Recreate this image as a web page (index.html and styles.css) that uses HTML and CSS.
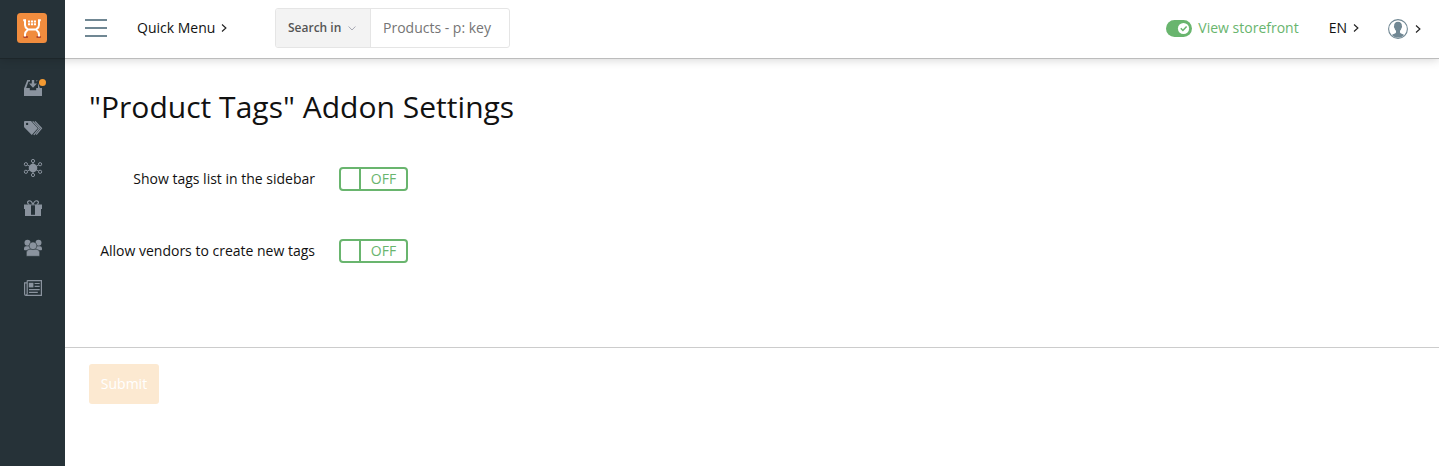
FILE: index.html
```html
<!DOCTYPE html>
<html lang="en">
<head>
<meta charset="utf-8">
<title>Addon Settings</title>
<link rel="stylesheet" href="styles.css">
</head>
<body>
<header class="topbar">
  <a class="brand">
    <svg width="30" height="30" viewBox="0 0 30 30">
      <rect width="30" height="30" rx="3.5" fill="#f08c3e"/>
      <path d="M7.2 24H10.2M20.2 24H23.2" stroke="#b5492c" stroke-width="1.8" stroke-linecap="round"/>
      <path d="M6.2 7.3H8V12C8 14.5 9.3 15.2 11 16.5H19C20.7 15.2 22 14.5 22 12V7.3H23.8M8 23.5V21.2C8 19 9.3 18 11 16.5M22 23.5V21.2C22 19 20.7 18 19 16.5" fill="none" stroke="#fff" stroke-width="2"/>
      <path d="M11 8.5H19M11 11.3H19" stroke="#fff" stroke-width="2" stroke-dasharray="2.1 .85"/>
    </svg>
  </a>
  <div class="bar">
    <svg class="burger" width="22" height="18" viewBox="0 0 22 18"><path d="M0 1H22M0 9H22M0 17H22" stroke="#708793" stroke-width="2"/></svg>
    <a class="quick">Quick Menu <svg class="caret" width="6" height="8" viewBox="0 0 6 8"><path d="M1 .5L4.9 4L1 7.5"/></svg></a>
    <div class="search">
      <span class="scope">Search in <svg width="8" height="5" viewBox="0 0 8 5"><path d="M.6.5L4 4L7.4.5" fill="none" stroke="#a7a9b4"/></svg></span>
      <span class="query">Products - p: key</span>
    </div>
    <a class="storefront">
      <svg width="26" height="17" viewBox="0 0 26 17"><rect width="26" height="17" rx="8.5" fill="#69b56e"/><circle cx="17.5" cy="8.5" r="5.6" fill="#fff"/><path d="M14.8 8.3L16.9 10.5L20.6 6.5" fill="none" stroke="#69b56e" stroke-width="1.5"/></svg>
      View storefront</a>
    <a class="lang">EN <svg class="caret" width="6" height="8" viewBox="0 0 6 8"><path d="M1 .5L4.9 4L1 7.5"/></svg></a>
    <a class="user">
      <svg width="20" height="20" viewBox="0 0 20 20"><circle cx="10" cy="10" r="9.4" fill="#fff" stroke="#708793" stroke-width="1.1"/><path d="M10 2.8C7.3 2.8 6 4.5 6.1 7C5.7 7.3 6 8.8 6.6 9.2C6.8 10.4 7.3 11.2 8 11.8V13.4C7.6 14.6 5.3 14.9 3.9 15.9C5.4 17.6 7.5 18.5 10 18.5S14.6 17.6 16.1 15.9C14.7 14.9 12.4 14.6 12 13.4V11.8C12.7 11.2 13.2 10.4 13.4 9.2C14 8.8 14.3 7.3 13.9 7C14 4.5 12.7 2.8 10 2.8Z" fill="#708793"/></svg>
      <svg class="caret" width="6" height="8" viewBox="0 0 6 8"><path d="M1 .5L4.9 4L1 7.5"/></svg></a>
  </div>
</header>
<div class="layout">
  <nav class="sidebar">
    <a class="item"><svg width="24" height="20" viewBox="0 0 24 20">
      <path d="M1 10.5L4.3 2H7V3.5H5.5L3.2 10H6.8V12.3H13.2V10H19V18H1ZM13.5 3.5V2H14.5L13.8 3.5ZM8.8 2H11.2V5.5H14L10 9.8L6 5.5H8.8ZM15 5L16.8 10H15Z"/><circle cx="19.5" cy="4.5" r="3.5" fill="#f49a32"/></svg></a>
    <a class="item"><svg width="24" height="20" viewBox="0 0 24 20">
      <path fill-rule="evenodd" d="M1 4Q1 3 2 3H8L14.8 10.2L8.8 17L1.4 9.5Q1 9 1 8.3ZM2.9 5.9A1.2 1.2 0 1 0 5.3 5.9A1.2 1.2 0 1 0 2.9 5.9Z"/><path d="M9.7 3.4L16.4 10.3L10.8 16.9M12 3.4L18.5 10.3L13.2 16.6" fill="none" stroke="#8a939e" stroke-width="1.2"/></svg></a>
    <a class="item"><svg width="24" height="20" viewBox="0 0 24 20">
      <circle cx="10" cy="10" r="4.3"/><g fill="none" stroke="#8a939e" stroke-width="1"><path d="M10 4.6V15.4M4.4 7L15.6 13M15.6 7L4.4 13"/><circle cx="10" cy="3" r="1.6"/><circle cx="10" cy="17" r="1.6"/><circle cx="2.9" cy="6.2" r="1.6"/><circle cx="17.1" cy="6.2" r="1.6"/><circle cx="2.9" cy="13.8" r="1.6"/><circle cx="17.1" cy="13.8" r="1.6"/></g></svg></a>
    <a class="item"><svg width="24" height="20" viewBox="0 0 24 20">
      <path d="M1 6.5H19V11H18V18H2V11H1Z"/><path d="M8 7.3H12V16.8H8Z" fill="#263238"/><path d="M9.8 6.5C9 3.8 7.5 2.6 6 2.8C4 3.2 4 5.8 6.3 6.5M10.2 6.5C11 3.8 12.5 2.6 14 2.8C16 3.2 16 5.8 13.7 6.5" fill="none" stroke="#8a939e" stroke-width="1.2"/></svg></a>
    <a class="item"><svg width="24" height="20" viewBox="0 0 24 20">
      <circle cx="4.5" cy="4.8" r="3"/><circle cx="15.5" cy="4.8" r="3"/><path d="M1 10.5Q1 8.2 3 8.2H8V12.2H1.8Q1 12.2 1 11.3ZM19 10.5Q19 8.2 17 8.2H12V12.2H18.2Q19 12.2 19 11.3Z"/><g stroke="#263238" stroke-width=".6"><path d="M3.3 18.3V14.7Q3.3 11.2 7 11.2H13Q16.7 11.2 16.7 14.7V18.3Z"/><circle cx="10" cy="7.8" r="3.9"/></g></svg></a>
    <a class="item"><svg width="24" height="20" viewBox="0 0 24 20">
      <g fill="none" stroke="#8a939e" stroke-width="1.2"><path d="M4.2 2.6H18.4V17.4H3Q1.6 17.4 1.6 16V4.8H4.2M4.2 2.6V15.5Q4.2 17.2 2.9 17.2"/><path d="M11.6 5.5H16.7M11.6 8.3H16.7M6 11.6H16.7M6 14.4H14.8"/></g><path d="M5.8 4.8H10.4V9.4H5.8Z"/></svg></a>
  </nav>
  <main class="content">
    <h1 class="title">"Product Tags" Addon Settings</h1>
    <div class="field"><span class="label">Show tags list in the sidebar</span><span class="toggle"><i class="knob"></i><span class="state">OFF</span></span></div>
    <div class="field"><span class="label">Allow vendors to create new tags</span><span class="toggle"><i class="knob"></i><span class="state">OFF</span></span></div>
    <div class="actions"><button class="submit" disabled>Submit</button></div>
  </main>
</div>
</body>
</html>
```

FILE: styles.css
```css
* { box-sizing: border-box; }
body { margin: 0; height: 466px; overflow: hidden; display: flex; flex-direction: column; background: #fff; color: #111; font: 14px/20px "Open Sans", sans-serif; }
svg { display: block; flex: none; }
.topbar { display: flex; flex: none; height: 59px; position: relative; z-index: 1; box-shadow: 0 1px 9px rgba(0, 0, 0, .17); }
.brand { width: 65px; padding: 13px 0 0 17px; background: #263238; border-bottom: 1px solid #1d262a; }
.bar { flex: 1; display: flex; align-items: center; padding: 0 18px 2px 20px; background: #fff; border-bottom: 1px solid #bcbcbc; }
.caret { fill: none; stroke: #222; stroke-width: 1.15; }
.quick, .lang, .user, .storefront { display: flex; align-items: center; gap: 6px; }
.quick { margin-left: 30px; width: 138px; }
.search { display: flex; width: 235px; height: 40px; border: 1px solid #e5e5e5; border-radius: 3px; overflow: hidden; }
.scope { display: flex; align-items: center; gap: 7px; width: 95px; padding-left: 12px; background: #f3f3f3; border-right: 1px solid #e5e5e5; color: #555; font-size: 12px; font-weight: 600; }
.query { padding: 9px 12px; color: #757575; }
.storefront { margin-left: auto; color: #69b56e; }
.lang { margin-left: 30px; }
.user { margin: 2px 0 0 29px; gap: 7px; }
.layout { flex: 1; display: flex; }
.sidebar { width: 65px; padding: 9px 0 0 23px; background: #263238; }
.item { display: flex; align-items: center; height: 40px; fill: #8a939e; }
.content { flex: 1; }
.title { margin: 28px 24px 40px; font-size: 30px; line-height: 40px; font-weight: 400; letter-spacing: .02px; }
.field { display: flex; align-items: center; height: 24px; margin-bottom: 48px; }
.label { width: 250px; margin-right: 24px; text-align: right; }
.toggle { display: flex; width: 69px; height: 24px; border: 2px solid #69b56e; border-radius: 4px; color: #69b56e; }
.knob { width: 20px; border-right: 2px solid #69b56e; }
.state { flex: 1; text-align: center; }
.actions { margin-top: 84px; padding: 16px 24px; border-top: 1px solid #ccc; }
.submit { display: block; width: 70px; height: 40px; padding: 0; border: 0; border-radius: 3px; background: #fce9d1; color: #fff; font: 400 14px/20px "Open Sans", sans-serif; }
```
